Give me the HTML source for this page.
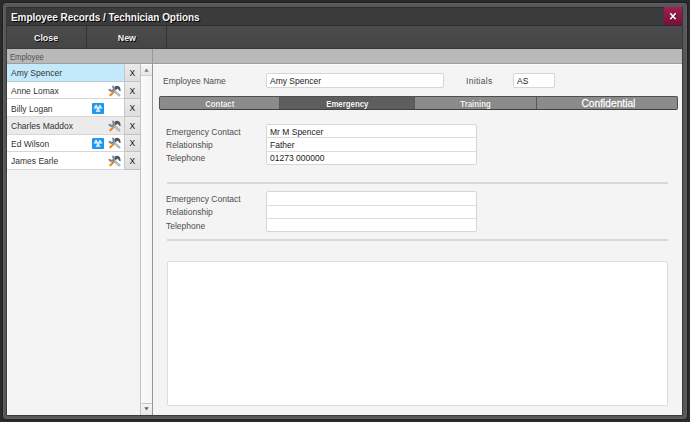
<!DOCTYPE html>
<html><head><meta charset="utf-8">
<style>
*{margin:0;padding:0;box-sizing:border-box}
html,body{width:690px;height:422px;overflow:hidden;background:#2a2a2a;font-family:"Liberation Sans",sans-serif}
.a{position:absolute}
#frame{left:3px;top:3px;width:684px;height:416px;background:#575757;border-radius:4px;box-shadow:0 0 0 1px #1f1f1f,inset 0 0 0 1px #616161}
#inner{left:6px;top:7px;width:677px;height:409px;background:#3a3a3a;border-radius:0 0 2px 2px}
#title{left:7px;top:7px;width:675px;height:18px;background:#3b3b3b;border-top:1px solid #2f2f2f}
#ttl{left:11px;top:11px;font-size:10px;font-weight:bold;color:#f6f6f6;text-shadow:1px 1px 0 #000;line-height:14px;letter-spacing:-0.05px;white-space:nowrap}
#xbtn{left:664px;top:7px;width:18px;height:18px;background:linear-gradient(#a02052,#7c0e39)}
#toolbar{left:7px;top:25px;width:675px;height:24px;background:linear-gradient(#4c4c4c,#454545);border-top:1px solid #2c2c2c;border-bottom:1px solid #3a3a3a}
.tb{position:absolute;top:0;height:22px;border-right:1px solid #333;color:#f2f2f2;font-size:9.6px;font-weight:bold;text-align:center;line-height:16px;padding-top:3.5px;text-shadow:1px 1px 0 #000}
#hdr{left:7px;top:49px;width:675px;height:15px;background:#b9b9b9;border-bottom:1px solid #9d9d9d}
#hdr span{position:absolute;left:3px;top:2.6px;font-size:8.2px;transform:scaleX(.93);transform-origin:0 0;color:#505050;line-height:12px}
#hdrsep{left:152px;top:49px;width:1px;height:15px;background:#9a9a9a}
#list{left:7px;top:64px;width:146px;height:351px;background:#f3f3f3;border-left:1px solid #fbfbfb}
.row{position:absolute;left:7px;width:117px;background:#fff;border-bottom:1px solid #d6d6d6}
.nm{position:absolute;left:11px;font-size:8.5px;color:#333;line-height:12px;white-space:nowrap}
.xc{position:absolute;left:124px;width:17px;background:linear-gradient(#ebebeb,#dedede);border-left:1px solid #c8c8c8;border-right:1px solid #bdbdbd;border-bottom:1px solid #c2c2c2}
.xg{position:absolute;left:129.5px;font-size:8.5px;color:#111;line-height:12px}
#sb{left:140px;top:64px;width:13px;height:351px;background:linear-gradient(90deg,#fbfbfb,#f4f4f4);border-left:1px solid #c2c2c2;border-right:1px solid #959595}
.sbb{position:absolute;left:141px;width:11px;height:11px;background:linear-gradient(#f4f4f4,#e6e6e6)}
#panel{left:153px;top:64px;width:529px;height:351px;background:#f4f4f4;border-top:1px solid #fdfdfd}
.lbl{position:absolute;font-size:8.5px;color:#4e4e4e;line-height:12px;white-space:nowrap}
.val{position:absolute;font-size:8.5px;color:#222;line-height:12px;white-space:nowrap}
.inp{position:absolute;background:#fff;border:1px solid #d6d6d6;border-radius:2px}
.grp{position:absolute;background:#fff;border:1px solid #d6d6d6;border-radius:2px}
.dv{position:absolute;left:0;right:0;height:1px;background:#dcdcdc}
#tabs{left:159px;top:96px;width:519px;height:14px;border:1px solid #505050;border-bottom-color:#3e3e3e;border-radius:2px;background:#8b8b8b;overflow:hidden}
.tab{position:absolute;top:0;height:12px;color:#fbfbfb;font-size:9px;font-weight:bold;text-align:center;line-height:14.2px;border-right:1px solid #585858;text-shadow:0 0 1px rgba(0,0,0,.35)}
.tl{display:inline-block;transform:scaleX(.87)}
.sep{position:absolute;left:167px;width:501px;height:2px;background:#d8d8d8}
</style></head><body>
<div id="frame" class="a"></div>
<div id="inner" class="a"></div>
<div id="title" class="a"></div>
<div id="ttl" class="a">Employee Records / Technician Options</div>
<div id="xbtn" class="a"><svg width="18" height="19" style="position:absolute;left:0;top:0"><path d="M7 7 L12.4 13 M12.4 7 L7 13" stroke="#3a0418" stroke-width="1.6" opacity=".7"/><path d="M6.3 6.3 L11.7 12.3 M11.7 6.3 L6.3 12.3" stroke="#fff" stroke-width="1.6"/></svg></div>
<div id="toolbar" class="a">
 <div class="tb" style="left:0;width:80px"><span class="tl" style="transform:scaleX(.92)">Close</span></div>
 <div class="tb" style="left:80px;width:80px"><span class="tl" style="transform:scaleX(.92)">New</span></div>
</div>
<div id="hdr" class="a"><span>Employee</span></div>
<div id="hdrsep" class="a"></div>
<div id="list" class="a"></div>

<!-- rows -->
<div class="row" style="top:64px;height:17.8px;background:#c2eafa;border-bottom-color:#b5ccd6"></div>
<div class="row" style="top:81.8px;height:17.6px"></div>
<div class="row" style="top:99.4px;height:17.6px"></div>
<div class="row" style="top:117.0px;height:17.5px;background:#ebebeb"></div>
<div class="row" style="top:134.5px;height:17.6px"></div>
<div class="row" style="top:152.1px;height:17.6px"></div>
<div class="xc" style="top:64px;height:17.8px"></div>
<div class="xc" style="top:81.8px;height:17.6px"></div>
<div class="xc" style="top:99.4px;height:17.6px"></div>
<div class="xc" style="top:117.0px;height:17.5px"></div>
<div class="xc" style="top:134.5px;height:17.6px"></div>
<div class="xc" style="top:152.1px;height:17.6px"></div>
<div class="nm" style="top:67.4px">Amy Spencer</div>
<div class="nm" style="top:85.0px">Anne Lomax</div>
<div class="nm" style="top:102.5px">Billy Logan</div>
<div class="nm" style="top:120.1px">Charles Maddox</div>
<div class="nm" style="top:137.6px">Ed Wilson</div>
<div class="nm" style="top:155.2px">James Earle</div>
<div class="xg" style="top:67.1px">X</div>
<div class="xg" style="top:84.7px">X</div>
<div class="xg" style="top:102.2px">X</div>
<div class="xg" style="top:119.8px">X</div>
<div class="xg" style="top:137.3px">X</div>
<div class="xg" style="top:154.8px">X</div>


<svg width="0" height="0" style="position:absolute">
 <defs>
  <symbol id="tools" viewBox="0 0 16 16">
   <path d="M7.2 4.7 L8.5 3.1 Q11.4 1.8 13.1 4.6 L13.7 7.9 L12.4 8.1 Q11.8 5.8 10.2 5.7 L8.6 7.4 Z" fill="#4d5a66"/>
   <path d="M3.3 12.3 L6.3 9.2" stroke="#f5820e" stroke-width="2.1" stroke-linecap="round"/>
   <path d="M6.6 7.3 L12.3 12.3" stroke="#9aa6af" stroke-width="2.3" stroke-linecap="round"/>
   <path d="M8.6 9.1 L12.2 12.2" stroke="#d0d7dc" stroke-width="1" stroke-linecap="round"/>
   <path d="M5.3 3.2 A2.4 2.4 0 1 1 2.2 6.2" stroke="#7a8792" stroke-width="2.1" fill="none"/>
  </symbol>
  <symbol id="mot" viewBox="0 0 12 11">
   <rect x="0" y="0" width="12" height="11" rx="1" fill="#1d97f1"/>
   <path d="M4.1 1.7 L6.1 5.3 L2.1 5.3 Z M7.9 1.9 L9.9 5.3 L5.9 5.3 Z M6.1 5.3 L8.2 8.6 L4.0 8.6 Z" fill="#fff" stroke="#fff" stroke-width="0.5" stroke-linejoin="round"/>
   <path d="M4.1 3.7 L4.7 4.7 L3.5 4.7 Z M7.9 3.8 L8.5 4.7 L7.3 4.7 Z M6.1 7.1 L6.7 8.0 L5.5 8.0 Z" fill="#1d97f1"/>
  </symbol>
 </defs>
</svg>
<svg class="a" style="left:107px;top:82.7px" width="16" height="16"><use href="#tools"/></svg>
<svg class="a" style="left:107px;top:117.8px" width="16" height="16"><use href="#tools"/></svg>
<svg class="a" style="left:107px;top:135.2px" width="16" height="16"><use href="#tools"/></svg>
<svg class="a" style="left:107px;top:152.8px" width="16" height="16"><use href="#tools"/></svg>
<svg class="a" style="left:92.3px;top:103px" width="12" height="11"><use href="#mot"/></svg>
<svg class="a" style="left:92.3px;top:137.9px" width="12" height="11"><use href="#mot"/></svg>

<div id="sb" class="a"></div>
<div class="sbb" style="top:64px;height:12px;border-top:1px solid #fff;border-bottom:1px solid #d0d0d0"><svg width="11" height="11" style="position:absolute;left:0;top:0"><path d="M3.3 6.8 L5.5 3.6 L7.7 6.8 Z" fill="#7a7a7a"/></svg></div>
<div class="sbb" style="top:403px;height:12px;border-top:1px solid #c8c8c8"><svg width="11" height="11" style="position:absolute;left:0;top:0"><path d="M3.3 3.2 L7.7 3.2 L5.5 6.3 Z" fill="#5a5a5a"/></svg></div>

<div id="panel" class="a"></div>
<div class="lbl" style="left:163px;top:75px">Employee Name</div>
<div class="inp" style="left:266px;top:73px;width:178px;height:15px"></div>
<div class="val" style="left:270px;top:75px">Amy Spencer</div>
<div class="lbl" style="left:466px;top:75px;letter-spacing:0.3px">Initials</div>
<div class="inp" style="left:513px;top:73px;width:42px;height:15px"></div>
<div class="val" style="left:517px;top:75px">AS</div>

<div id="tabs" class="a">
 <div class="tab" style="left:0;width:120px"><span class="tl">Contact</span></div>
 <div class="tab" style="left:120px;width:135px;background:#5e5e5e"><span class="tl">Emergency</span></div>
 <div class="tab" style="left:255px;width:122px"><span class="tl">Training</span></div>
 <div class="tab" style="left:377px;width:142px;border-right:0;font-size:10px;font-weight:normal;color:#fff;line-height:14px;-webkit-text-stroke:0.3px #fff"><span style="display:inline-block;transform:scaleX(1.02)">Confidential</span></div>
</div>

<div class="lbl" style="left:166px;top:125.5px">Emergency Contact</div>
<div class="lbl" style="left:166px;top:138.7px">Relationship</div>
<div class="lbl" style="left:166px;top:152px">Telephone</div>
<div class="grp" style="left:266px;top:124px;width:211px;height:41px"><div class="dv" style="top:12px"></div><div class="dv" style="top:26px"></div></div>
<div class="val" style="left:270px;top:125.8px">Mr M Spencer</div>
<div class="val" style="left:270px;top:138.8px">Father</div>
<div class="val" style="left:270px;top:152.2px">01273 000000</div>
<div class="sep" style="top:182px"></div>

<div class="lbl" style="left:166px;top:193px">Emergency Contact</div>
<div class="lbl" style="left:166px;top:206.3px">Relationship</div>
<div class="lbl" style="left:166px;top:219.6px">Telephone</div>
<div class="grp" style="left:266px;top:191px;width:211px;height:41px"><div class="dv" style="top:13px"></div><div class="dv" style="top:26px"></div></div>
<div class="sep" style="top:239px"></div>
<div class="inp" style="left:167px;top:261px;width:501px;height:145px;border-color:#dcdcdc"></div>
</body></html>
